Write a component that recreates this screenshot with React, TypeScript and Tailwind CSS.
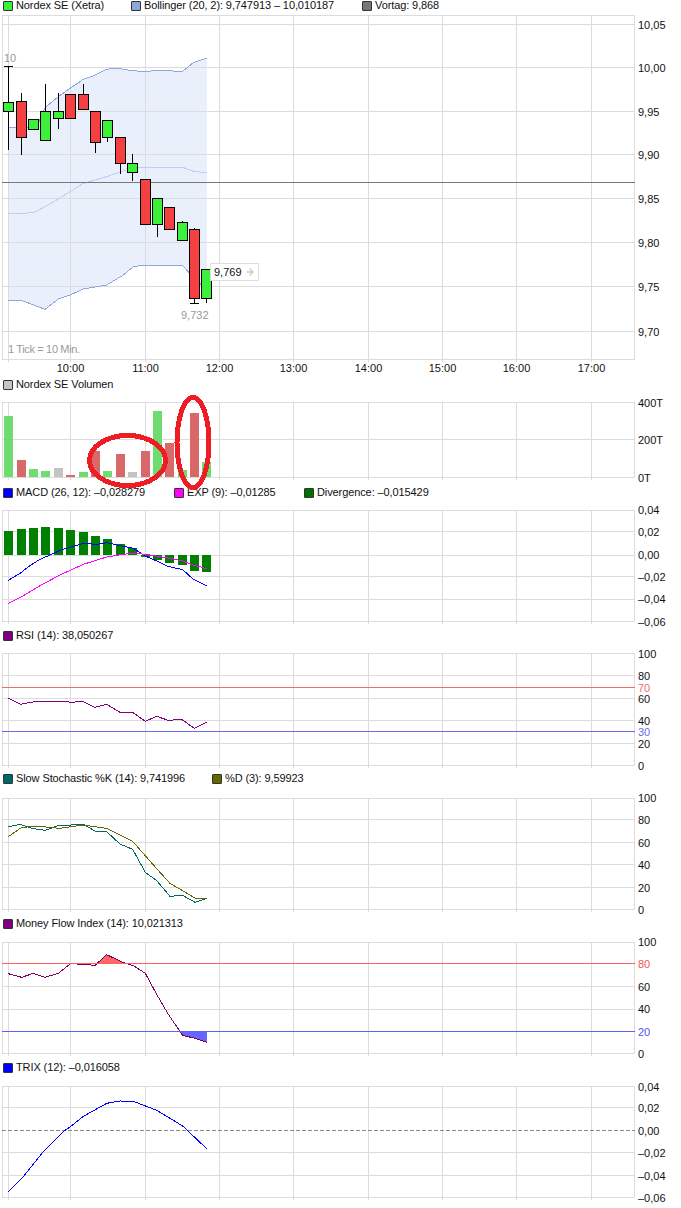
import { ArrowRight } from "lucide-react";

const GRID = "#dcdcdc";
const VX = [8, 70, 145, 219, 293, 368, 442, 516, 591];
const TIMES = ["10:00", "11:00", "12:00", "13:00", "14:00", "15:00", "16:00", "17:00"];
const BAR_X = [4, 17, 29, 41, 54, 66, 79, 91, 103, 116, 128, 141, 153, 165, 178, 190, 202];

// values read off the 3x crops: x/3, base + y/3
const pts = (base: number, list: number[][]) => list.map(([x, y]) => `${x / 3},${base + y / 3}`).join(" ");

const candles = [
  { c: 8, up: 1, t: 102, b: 111, hi: 66, lo: 150 },
  { c: 21, up: 0, t: 101, b: 137, hi: 93, lo: 155 },
  { c: 33, up: 1, t: 119, b: 129, hi: 119, lo: 129 },
  { c: 45, up: 1, t: 111, b: 140, hi: 84, lo: 140 },
  { c: 58, up: 1, t: 111, b: 118, hi: 93, lo: 129 },
  { c: 70, up: 0, t: 94, b: 118, hi: 94, lo: 118 },
  { c: 83, up: 0, t: 94, b: 109, hi: 84, lo: 109 },
  { c: 95, up: 0, t: 111, b: 142, hi: 111, lo: 153 },
  { c: 107, up: 1, t: 120, b: 137, hi: 120, lo: 142 },
  { c: 120, up: 0, t: 137, b: 163, hi: 137, lo: 174 },
  { c: 132, up: 1, t: 163, b: 172, hi: 154, lo: 181 },
  { c: 145, up: 0, t: 179, b: 224, hi: 179, lo: 224 },
  { c: 157, up: 1, t: 198, b: 224, hi: 198, lo: 237 },
  { c: 169, up: 0, t: 207, b: 229, hi: 207, lo: 229 },
  { c: 182, up: 1, t: 222, b: 240, hi: 221, lo: 241 },
  { c: 194, up: 0, t: 229, b: 298, hi: 228, lo: 303 },
  { c: 206, up: 1, t: 269, b: 298, hi: 269, lo: 303 },
];

const upper = [[25, 382], [110, 382], [135, 323], [175, 290], [210, 265], [250, 238], [280, 228], [320, 208], [350, 204], [390, 211], [420, 214], [490, 212], [548, 214], [580, 188], [620, 174]];
const lower = [[25, 901], [65, 901], [135, 928], [175, 897], [210, 885], [250, 867], [320, 855], [370, 825], [400, 800], [430, 796], [548, 796], [570, 822], [600, 850], [620, 880]];
const middle = [[25, 640], [75, 640], [105, 636], [150, 612], [210, 575], [250, 550], [320, 530], [400, 502], [548, 502], [580, 514], [620, 518]];

const volumes = [
  [416, "g"], [460, "r"], [469, "g"], [471, "g"], [468, "n"], [475, "r"], [472, "g"], [451, "r"], [471, "g"],
  [454, "r"], [472, "n"], [451, "r"], [411, "g"], [443, "r"], [470, "g"], [413, "r"], [462, "g"],
] as [number, string][];
const VOL_COLOR: Record<string, string> = { g: "#6edc6e", r: "#d96868", n: "#c4c4c4" };

const divergence = [531, 529, 528, 527, 528, 530, 532, 536, 539, 544, 548, 557, 560, 563, 565, 571, 572];

function Swatch({ color }: { color: string }) {
  return <span className="h-[10px] w-[10px] shrink-0 rounded-[1px] border border-[#333]" style={{ background: color }} />;
}

function Legend({ items, className }: { items: { color: string; label: string; x: number }[]; className: string }) {
  return (
    <div className={`relative w-full text-[11px] leading-none tracking-[-0.1px] text-[#111] ${className}`}>
      {items.map((i) => (
        <div key={i.label} className="absolute flex items-center gap-[3px] whitespace-nowrap" style={{ left: i.x }}>
          <Swatch color={i.color} />
          <span>{i.label}</span>
        </div>
      ))}
    </div>
  );
}

type Tick = { y: number; label: string; color?: string };

function Plot({ top, bottom, lines, ticks, children, under }: { top: number; bottom: number; lines: number[]; ticks: Tick[]; children?: React.ReactNode; under?: React.ReactNode }) {
  const h = bottom - top + 4;
  return (
    <div className="relative w-full" style={{ height: h }}>
      <svg width={681} height={h} viewBox={`0 ${top} 681 ${h}`} shapeRendering="crispEdges" className="block">
        {under}
        <rect x={2.5} y={top + 0.5} width={632} height={bottom - top} fill="none" stroke={GRID} />
        {lines.map((y) => (
          <line key={y} x1={2} x2={635} y1={y + 0.5} y2={y + 0.5} stroke={GRID} />
        ))}
        {VX.map((x) => (
          <line key={x} x1={x + 0.5} x2={x + 0.5} y1={top} y2={bottom + 3} stroke={GRID} />
        ))}
        {children}
      </svg>
      {ticks.map((t) => (
        <span
          key={t.label}
          className="absolute left-[638px] text-[11px] leading-none text-[#111]"
          style={{ top: t.y - top - 5, color: t.color }}
        >
          {t.label}
        </span>
      ))}
    </div>
  );
}

function Line({ base, list, color }: { base: number; list: number[][]; color: string }) {
  return <polyline points={pts(base, list)} fill="none" stroke={color} />;
}

export default function App() {
  return (
    <div className="relative h-[1208px] w-[681px] overflow-hidden bg-white font-['Liberation_Sans',Arial,sans-serif]">
      <Legend
        className="h-[15px]"
        items={[
          { color: "#3cf03c", label: "Nordex SE (Xetra)", x: 3 },
          { color: "#8fa8dc", label: "Bollinger (20, 2): 9,747913 – 10,010187", x: 131 },
          { color: "#777777", label: "Vortag: 9,868", x: 362 },
        ]}
      />

      {/* main chart */}
      <div className="relative">
        <Plot
          top={15}
          bottom={359}
          lines={[24, 67, 111, 154, 198, 242, 286, 331]}
          ticks={[
            { y: 25, label: "10,05" }, { y: 68, label: "10,00" }, { y: 112, label: "9,95" }, { y: 155, label: "9,90" },
            { y: 199, label: "9,85" }, { y: 243, label: "9,80" }, { y: 287, label: "9,75" }, { y: 332, label: "9,70" },
          ]}
          under={
            <polygon points={`${pts(0, upper)} ${pts(0, [...lower].reverse())}`} fill="#e9f0fb" />
          }
        >
          <Line base={0} list={upper} color="#8fa8dc" />
          <Line base={0} list={lower} color="#8fa8dc" />
          <Line base={0} list={middle} color="#bcd0f4" />
          <line x1={2} x2={635} y1={182.5} y2={182.5} stroke="#777777" />
          <line x1={4} x2={13} y1={66.5} y2={66.5} stroke="#000" />
          <line x1={190} x2={199} y1={303.5} y2={303.5} stroke="#000" />
          {candles.map((k) => (
            <g key={k.c}>
              <line x1={k.c + 0.5} x2={k.c + 0.5} y1={k.hi} y2={k.lo} stroke="#000" />
              <rect x={k.c - 4.5} y={k.t + 0.5} width={10} height={k.b - k.t} fill={k.up ? "#3cf03c" : "#f44040"} stroke="#000" />
            </g>
          ))}
        </Plot>
        <span className="absolute left-[4px] top-[38px] text-[11px] leading-none text-[#999]">10</span>
        <span className="absolute left-[181px] top-[295px] text-[11px] leading-none text-[#999]">9,732</span>
        <span className="absolute left-[8px] top-[329px] text-[11px] leading-none tracking-[-0.35px] text-[#999]">1 Tick = 10 Min.</span>
        <div className="absolute left-[210px] top-[248px] flex h-[18px] w-[49px] items-center gap-[3px] border border-[#ddd] bg-white pl-[3px] text-[11px] leading-none text-[#111]">
          <span>9,769</span>
          <ArrowRight className="h-[10px] w-[10px] text-[#ccc]" strokeWidth={3.5} />
        </div>
      </div>

      {/* time axis */}
      <div className="relative h-[14px] text-[11px] leading-none text-[#111]">
        {TIMES.map((t, i) => (
          <span key={t} className="absolute top-[0px] w-[40px] -translate-x-1/2 text-center" style={{ left: VX[i + 1] + 0.5 }}>
            {t}
          </span>
        ))}
      </div>

      <Legend className="h-[25px] pt-[2px]" items={[{ color: "#c4c4c4", label: "Nordex SE Volumen", x: 3 }]} />
      <Plot
        top={402}
        bottom={477}
        lines={[439]}
        ticks={[{ y: 403, label: "400T" }, { y: 440, label: "200T" }, { y: 478, label: "0T" }]}
      >
        {volumes.map(([y, kind], i) => (
          <rect key={i} x={BAR_X[i]} y={y} width={9} height={477 - y} fill={VOL_COLOR[kind]} />
        ))}
      </Plot>

      <Legend
        className="h-[29px] pt-[6px]"
        items={[
          { color: "#0000ff", label: "MACD (26, 12): –0,028279", x: 3 },
          { color: "#ff00ff", label: "EXP (9): –0,01285", x: 174 },
          { color: "#007000", label: "Divergence: –0,015429", x: 304 },
        ]}
      />
      <Plot
        top={510}
        bottom={621}
        lines={[531, 555, 576, 599]}
        ticks={[
          { y: 510, label: "0,04" }, { y: 532, label: "0,02" }, { y: 555, label: "0,00" },
          { y: 577, label: "–0,02" }, { y: 599, label: "–0,04" }, { y: 622, label: "–0,06" },
        ]}
      >
        {divergence.map((y, i) => (
          <rect key={i} x={BAR_X[i]} y={Math.min(y, 555)} width={9} height={Math.abs(y - 555)} fill="#008000" />
        ))}
        <Line base={375} color="#0000ff" list={[[25, 616], [60, 595], [90, 572], [120, 553], [150, 540], [180, 526], [210, 517], [250, 505], [290, 508], [320, 503], [360, 512], [400, 520], [436, 543], [470, 558], [500, 573], [548, 584], [580, 613], [620, 632]]} />
        <Line base={375} color="#ff00ff" list={[[25, 685], [60, 668], [120, 632], [180, 600], [250, 568], [320, 546], [350, 541], [400, 534], [436, 538], [500, 548], [548, 558], [580, 570], [620, 581]]} />
      </Plot>

      <Legend className="h-[28px] pt-[5px]" items={[{ color: "#800080", label: "RSI (14): 38,050267", x: 3 }]} />
      <Plot
        top={653}
        bottom={765}
        lines={[675, 698, 720, 743]}
        ticks={[
          { y: 654, label: "100" }, { y: 676, label: "80" }, { y: 688, label: "70", color: "#ee6e6e" }, { y: 699, label: "60" },
          { y: 721, label: "40" }, { y: 732, label: "30", color: "#6a6aee" }, { y: 744, label: "20" }, { y: 766, label: "0" },
        ]}
      >
        <line x1={2} x2={635} y1={687.5} y2={687.5} stroke="#ee6e6e" />
        <line x1={2} x2={635} y1={731.5} y2={731.5} stroke="#6a6aee" />
        <Line base={630} color="#800080" list={[[25, 205], [62, 223], [90, 217], [120, 214], [190, 214], [215, 217], [248, 214], [285, 232], [320, 223], [360, 247], [398, 247], [436, 274], [470, 259], [505, 271], [545, 268], [583, 295], [620, 277]]} />
      </Plot>

      <Legend
        className="h-[29px] pt-[4px]"
        items={[
          { color: "#006666", label: "Slow Stochastic %K (14): 9,741996", x: 3 },
          { color: "#666600", label: "%D (3): 9,59923", x: 212 },
        ]}
      />
      <Plot
        top={798}
        bottom={909}
        lines={[819, 842, 864, 887]}
        ticks={[
          { y: 798, label: "100" }, { y: 820, label: "80" }, { y: 843, label: "60" },
          { y: 865, label: "40" }, { y: 888, label: "20" }, { y: 910, label: "0" },
        ]}
      >
        <Line base={630} color="#006666" list={[[25, 590], [60, 583], [100, 596], [135, 601], [175, 587], [250, 583], [285, 603], [320, 605], [360, 642], [398, 658], [436, 727], [470, 752], [510, 799], [548, 796], [585, 817], [620, 805]]} />
        <Line base={630} color="#666600" list={[[25, 620], [65, 592], [115, 589], [180, 595], [250, 585], [320, 595], [398, 634], [470, 716], [510, 760], [585, 804], [620, 805]]} />
      </Plot>

      <Legend className="h-[29px] pt-[5px]" items={[{ color: "#800080", label: "Money Flow Index (14): 10,021313", x: 3 }]} />
      <Plot
        top={942}
        bottom={1053}
        lines={[986, 1009]}
        ticks={[
          { y: 942, label: "100" }, { y: 964, label: "80", color: "#ee5555" }, { y: 987, label: "60" },
          { y: 1009, label: "40" }, { y: 1032, label: "20", color: "#5555ee" }, { y: 1054, label: "0" },
        ]}
      >
        <polygon points={pts(915, [[290, 145], [320, 119], [375, 145]])} fill="#ff6666" />
        <polygon points={pts(915, [[540, 349], [548, 361], [620, 382], [620, 349]])} fill="#6666ff" />
        <Line base={915} color="#800060" list={[[25, 176], [65, 187], [100, 175], [135, 187], [175, 175], [210, 147]]} />
        <Line base={915} color="#800060" list={[[232, 147], [285, 151], [320, 119], [370, 143], [400, 152], [436, 175], [470, 238], [505, 298], [548, 361], [585, 370], [620, 382]]} />
        <line x1={2} x2={635} y1={963.5} y2={963.5} stroke="#ff6060" />
        <line x1={2} x2={635} y1={1031.5} y2={1031.5} stroke="#6060ff" />
      </Plot>

      <Legend className="h-[29px] pt-[5px]" items={[{ color: "#0000ff", label: "TRIX (12): –0,016058", x: 3 }]} />
      <Plot
        top={1086}
        bottom={1197}
        lines={[1107, 1152, 1175]}
        ticks={[
          { y: 1087, label: "0,04" }, { y: 1108, label: "0,02" }, { y: 1131, label: "0,00" },
          { y: 1153, label: "–0,02" }, { y: 1176, label: "–0,04" }, { y: 1198, label: "–0,06" },
        ]}
      >
        <line x1={2} x2={635} y1={1130.5} y2={1130.5} stroke="#888888" strokeDasharray="4 2" />
        <Line base={915} color="#0000ff" list={[[25, 830], [70, 785], [130, 710], [190, 650], [215, 632], [250, 604], [320, 565], [360, 558], [400, 559], [470, 586], [548, 633], [620, 701]]} />
      </Plot>

      {/* hand-drawn red marks over the volume panel */}
      <svg className="pointer-events-none absolute left-0 top-0" width={681} height={520} shapeRendering="crispEdges">
        <ellipse cx={127.5} cy={460.5} rx={38} ry={25} fill="none" stroke="#ee1c25" strokeWidth={5} />
        <ellipse cx={193} cy={442.5} rx={16} ry={45} fill="none" stroke="#ee1c25" strokeWidth={5} />
      </svg>
    </div>
  );
}
